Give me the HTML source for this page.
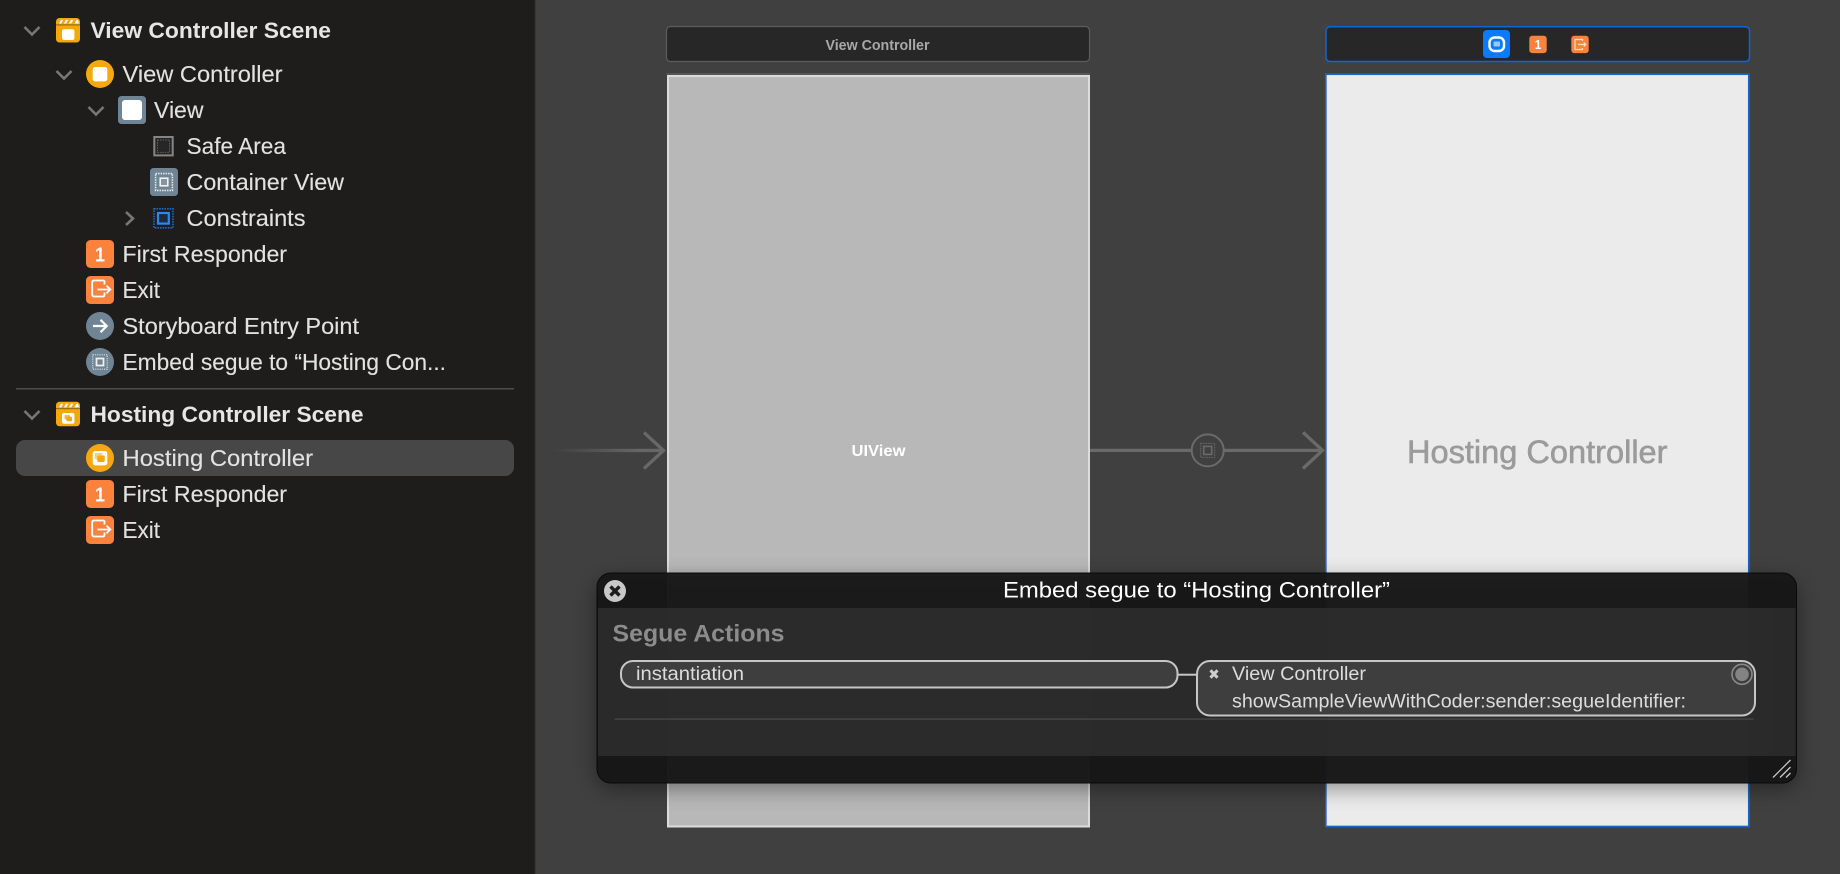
<!DOCTYPE html>
<html><head><meta charset="utf-8"><title>Storyboard</title>
<style>
html,body{margin:0;padding:0;width:1840px;height:874px;overflow:hidden;background:#404040}
svg{display:block}
text{font-family:"Liberation Sans",sans-serif;white-space:pre}
.s{font-size:22.8px;fill:#e2e2e2;stroke:#e2e2e2;stroke-width:.12}
.b{font-size:22.6px;font-weight:bold;fill:#e6e6e6}
.p{font-size:19px;fill:#dcdcdc}
</style></head><body>
<svg width="1840" height="874" viewBox="0 0 1840 874" xmlns="http://www.w3.org/2000/svg">
<defs>
<linearGradient id="fade" x1="553" x2="640" y1="0" y2="0" gradientUnits="userSpaceOnUse"><stop offset="0" stop-color="#666" stop-opacity="0"/><stop offset="1" stop-color="#666"/></linearGradient>
<filter id="blur" x="-10%" y="-20%" width="120%" height="140%"><feGaussianBlur stdDeviation="11"/></filter>
</defs>
<rect width="1840" height="874" fill="#404040"/>

<!-- sidebar -->
<rect width="534.5" height="874" fill="#1e1d1c"/>
<rect x="534.5" width="1" height="874" fill="#2c2c2c"/>
<rect x="16" y="440" width="498" height="36" rx="9" fill="#474747"/>
<rect x="16" y="388" width="498" height="1.5" fill="#4c4c4c"/>

<g fill="none" stroke="#777" stroke-width="2.6">
<path d="M24.5 27l7.5 7.5 7.5-7.5"/>
<path d="M56.5 71l7.5 7.5 7.5-7.5"/>
<path d="M88.5 107l7.5 7.5 7.5-7.5"/>
<path d="M126 212l7 6.5-7 6.5"/>
<path d="M24.5 411l7.5 7.5 7.5-7.5"/>
</g>

<!-- clapper 1 -->
<rect x="56" y="18" width="24" height="24.5" rx="3.5" fill="#f5a80d"/>
<rect x="56" y="24.4" width="24" height="1" fill="#8a6414"/>
<path d="M59 23.5l2-3.6h2.2l-2 3.6zM64 23.5l2-3.6h2.2l-2 3.6zM69 23.5l2-3.6h2.2l-2 3.6zM74.5 23.5l2-3.6h1.4l1 3.6z" fill="#fff"/>
<rect x="62" y="29.3" width="12.4" height="10.7" rx="2" fill="#fff"/>
<!-- VC -->
<circle cx="100" cy="74" r="14" fill="#f6a80c"/>
<rect x="92.7" y="67" width="14.6" height="14.4" rx="2.5" fill="#fff"/>
<!-- View -->
<rect x="118" y="96" width="28" height="28" rx="3.5" fill="#6f8494"/>
<rect x="122" y="100" width="20" height="20" rx="3" fill="#fff"/>
<!-- Safe area -->
<rect x="154.3" y="137" width="18.4" height="18.4" fill="#262626" stroke="#858585" stroke-width="2"/>
<rect x="157.5" y="140" width="12" height="12.4" fill="none" stroke="#5e5e5e" stroke-width="1" stroke-dasharray="1.5 1"/>
<!-- Container -->
<rect x="150" y="168" width="28" height="28" rx="3.5" fill="#6f8494"/>
<rect x="155.6" y="173.6" width="16.8" height="16.8" fill="none" stroke="#e8e8e8" stroke-width="1.6" stroke-dasharray="1.5 1"/>
<rect x="160.2" y="178.2" width="7.6" height="7.6" fill="#8496a4" stroke="#f2f2f2" stroke-width="1.6"/>
<!-- Constraints -->
<rect x="154" y="208.8" width="19" height="19" fill="none" stroke="#1d69c8" stroke-width="1.6" stroke-dasharray="1.6 1"/>
<rect x="158" y="213" width="10.8" height="10.6" fill="#1d2a3c" stroke="#2b86f0" stroke-width="2.2"/>
<!-- First responder -->
<rect x="86" y="240" width="28" height="28" rx="4.5" fill="#fa823c"/>
<text x="95" y="261.5" font-size="20" font-weight="bold" fill="#fff" textLength="10" lengthAdjust="spacingAndGlyphs">1</text>
<!-- Exit -->
<rect x="86" y="276" width="28" height="28" rx="4.5" fill="#fa823c"/>
<path d="M104.5 284.5v-2.6c0-.9-.6-1.4-1.4-1.4h-9.2c-1 0-1.7.7-1.7 1.7v12.6c0 1 .7 1.7 1.7 1.7h9.2c.8 0 1.4-.6 1.4-1.4v-2.6M97.500 289.500h12M106.500 285.700l3.800 3.800-3.800 3.800" fill="none" stroke="#fff" stroke-width="1.800"/>
<!-- Storyboard -->
<circle cx="100" cy="326" r="14" fill="#6f8494"/>
<path d="M93 326h13.500M100.500 319.800l6.200 6.200-6.200 6.200" fill="none" stroke="#fff" stroke-width="2.200"/>
<!-- Embed -->
<circle cx="100" cy="362" r="14" fill="#6f8494"/>
<rect x="92.800" y="354.800" width="14.400" height="14.400" fill="none" stroke="#d8dde0" stroke-width="1.100" stroke-dasharray="1.200 1"/>
<rect x="96.500" y="358.500" width="7" height="7" fill="none" stroke="#f0f0f0" stroke-width="1.800"/>
<!-- clapper 2 -->
<rect x="56" y="401.700" width="24" height="24.600" rx="3.500" fill="#f5a80d"/>
<rect x="56" y="408.200" width="24" height="1" fill="#8a6414"/>
<path d="M59 407.300l2-3.600h2.200l-2 3.600zM64 407.300l2-3.600h2.200l-2 3.600zM69 407.300l2-3.600h2.200l-2 3.600zM74.500 407.300l2-3.600h1.400l1 3.600z" fill="#fff"/>
<rect x="62" y="413" width="12.400" height="10.800" rx="2" fill="#fff"/>
<rect x="64.500" y="415" width="5.500" height="4.500" rx="1" fill="#f5b84a"/>
<rect x="66.500" y="416.800" width="5.500" height="4.500" rx="1" fill="#f5a80d"/>
<!-- Hosting VC -->
<circle cx="100" cy="458" r="14" fill="#f6a80c"/>
<rect x="92.700" y="451" width="14.600" height="14.400" rx="2.500" fill="#fff"/>
<rect x="94.800" y="453" width="7.500" height="6.500" rx="1.200" fill="#f8cf80"/>
<rect x="97.300" y="455.500" width="7.500" height="6.500" rx="1.200" fill="#f6a80c"/>
<!-- FR 2 -->
<rect x="86" y="480" width="28" height="28" rx="4.500" fill="#fa823c"/>
<text x="95" y="501.500" font-size="20" font-weight="bold" fill="#fff" textLength="10" lengthAdjust="spacingAndGlyphs">1</text>
<!-- Exit 2 -->
<rect x="86" y="516" width="28" height="28" rx="4.500" fill="#fa823c"/>
<path d="M104.500 524.500v-2.600c0-.9-.6-1.400-1.400-1.400h-9.200c-1 0-1.700.7-1.700 1.700v12.600c0 1 .7 1.700 1.700 1.700h9.200c.8 0 1.400-.6 1.400-1.400v-2.600M97.500 529.500h12M106.500 525.700l3.800 3.800-3.800 3.800" fill="none" stroke="#fff" stroke-width="1.800"/>

<!-- sidebar text -->
<text class="b" x="90.500" y="38" textLength="240.500" lengthAdjust="spacingAndGlyphs">View Controller Scene</text>
<text class="s" x="122.500" y="82" textLength="160" lengthAdjust="spacingAndGlyphs">View Controller</text>
<text class="s" x="154" y="118" textLength="49.500" lengthAdjust="spacingAndGlyphs">View</text>
<text class="s" x="186.500" y="154" textLength="99.500" lengthAdjust="spacingAndGlyphs">Safe Area</text>
<text class="s" x="186.500" y="190" textLength="157.500" lengthAdjust="spacingAndGlyphs">Container View</text>
<text class="s" x="186.500" y="226" textLength="119" lengthAdjust="spacingAndGlyphs">Constraints</text>
<text class="s" x="122.500" y="262" textLength="164.500" lengthAdjust="spacingAndGlyphs">First Responder</text>
<text class="s" x="122.500" y="298" textLength="37.500" lengthAdjust="spacingAndGlyphs">Exit</text>
<text class="s" x="122.500" y="334" textLength="236.500" lengthAdjust="spacingAndGlyphs">Storyboard Entry Point</text>
<text class="s" x="122.500" y="370" textLength="323.500" lengthAdjust="spacingAndGlyphs">Embed segue to “Hosting Con...</text>
<text class="b" x="90.500" y="422" textLength="273" lengthAdjust="spacingAndGlyphs">Hosting Controller Scene</text>
<text class="s" x="122.500" y="466" textLength="190.500" lengthAdjust="spacingAndGlyphs">Hosting Controller</text>
<text class="s" x="122.500" y="502" textLength="164.500" lengthAdjust="spacingAndGlyphs">First Responder</text>
<text class="s" x="122.500" y="538" textLength="37.500" lengthAdjust="spacingAndGlyphs">Exit</text>

<!-- scene bars -->
<rect x="666.500" y="26.500" width="423" height="35" rx="4" fill="#272727" stroke="#5c5c5c" stroke-width="1.200"/>
<text x="825.500" y="50" font-size="14.400" font-weight="bold" fill="#a8a8a8" textLength="104" lengthAdjust="spacingAndGlyphs">View Controller</text>
<rect x="1326" y="26.700" width="423.500" height="34.800" rx="4" fill="#272727" stroke="#0a66dc" stroke-width="1.500"/>
<rect x="1483" y="30" width="27" height="28" rx="4" fill="#0a7aff"/>
<rect x="1489.500" y="37.500" width="14.500" height="13.500" rx="5" fill="none" stroke="#fff" stroke-width="2.400"/>
<rect x="1493.500" y="41.500" width="6.500" height="5" rx="1" fill="#9cc8f8"/>
<rect x="1529.300" y="35.700" width="17.400" height="17.400" rx="3" fill="#fa823c"/>
<text x="1534.800" y="49" font-size="12.500" font-weight="bold" fill="#fff" textLength="6.500" lengthAdjust="spacingAndGlyphs">1</text>
<rect x="1571.300" y="35.700" width="17.400" height="17.400" rx="3" fill="#fa823c"/>
<path d="M1582.500 41v-1.500h-7.500v10h7.500V48M1578 44.500h7.500M1583.800 42.500l2 2-2 2" fill="none" stroke="#ffdcc4" stroke-width="1.200"/>

<!-- scene views -->
<rect x="666.500" y="73" width="423.500" height="2" fill="#555"/>
<rect x="668" y="76" width="421" height="750.500" fill="#b8b8b8" stroke="#dcdcdc" stroke-width="2"/>
<rect x="1325.800" y="74.200" width="423" height="752.300" fill="#ebebeb" stroke="#1a66c8" stroke-width="1.700"/>
<text x="851.500" y="456" font-size="15.800" font-weight="bold" fill="#fff" textLength="54" lengthAdjust="spacingAndGlyphs">UIView</text>
<text x="1407" y="463" font-size="32" fill="#9b9b9b" stroke="#9b9b9b" stroke-width=".6" textLength="260.500" lengthAdjust="spacingAndGlyphs">Hosting Controller</text>

<!-- segue arrows -->
<rect x="553" y="448.800" width="110" height="3.300" fill="url(#fade)"/>
<path d="M644 432.500l19.500 18-19.500 18" fill="none" stroke="#686868" stroke-width="3.300"/>
<path d="M1090 450.400h101M1224 450.400h97" fill="none" stroke="#6a6a6a" stroke-width="3.300"/>
<path d="M1303 432.300l19.500 18.100-19.500 18.100" fill="none" stroke="#6a6a6a" stroke-width="3.300"/>
<circle cx="1207.700" cy="450.400" r="16" fill="#404040" stroke="#6a6a6a" stroke-width="2"/>
<rect x="1200.700" y="443.400" width="14" height="14" fill="none" stroke="#6a6a6a" stroke-width="1" stroke-dasharray="1.500 1"/>
<rect x="1203.700" y="446.400" width="8" height="8" fill="none" stroke="#6a6a6a" stroke-width="1.600"/>

<!-- popup -->
<rect x="597" y="580" width="1199.500" height="208" rx="14" fill="#000" opacity=".42" filter="url(#blur)"/>
<rect x="597" y="573" width="1199.500" height="210" rx="14" fill="#171717" fill-opacity=".965" stroke="#0a0a0a" stroke-width="1"/>
<rect x="598" y="608" width="1197.500" height="148" fill="#2c2c2c" fill-opacity=".965"/>
<rect x="1772" y="608" width="23.500" height="148" fill="#292929"/>

<circle cx="615" cy="591" r="11" fill="#c8c8c8"/>
<path d="M610.500 586.500l9 9M619.500 586.500l-9 9" stroke="#1c1c1c" stroke-width="3.400" fill="none"/>
<text x="1003" y="597.700" font-size="22.400" fill="#fff" textLength="387" lengthAdjust="spacingAndGlyphs">Embed segue to “Hosting Controller”</text>
<text x="612.500" y="641.700" font-size="24.500" font-weight="bold" fill="#8c8c8c" textLength="172" lengthAdjust="spacingAndGlyphs">Segue Actions</text>

<rect x="621" y="661" width="556.500" height="26.500" rx="12" fill="#3e3e3e" stroke="#c6c6c6" stroke-width="2"/>
<text class="p" x="636" y="680" textLength="108" lengthAdjust="spacingAndGlyphs">instantiation</text>
<rect x="1177.500" y="673.700" width="20" height="2" fill="#c6c6c6"/>
<rect x="1197" y="661" width="558" height="54.500" rx="13" fill="#3e3e3e" stroke="#c6c6c6" stroke-width="2"/>
<path d="M1210.500 670.300l7 7.400M1217.500 670.300l-7 7.400" stroke="#cfcfcf" stroke-width="3" fill="none"/>
<text class="p" x="1232" y="680" textLength="134" lengthAdjust="spacingAndGlyphs">View Controller</text>
<text class="p" x="1232" y="707.500" textLength="454" lengthAdjust="spacingAndGlyphs">showSampleViewWithCoder:sender:segueIdentifier:</text>
<circle cx="1742" cy="674.300" r="10" fill="none" stroke="#8a8a8a" stroke-width="1.600"/>
<circle cx="1742" cy="674.300" r="6.800" fill="#838383"/>
<rect x="614.500" y="718.300" width="1139" height="1.600" fill="#434343"/>
<path d="M1773 777.500l17.500-17.500M1780 777.500l10.500-10.500M1786 777.500l4.500-4.500" stroke="#c8c8c8" stroke-width="1.300" fill="none"/>
</svg>
</body></html>
